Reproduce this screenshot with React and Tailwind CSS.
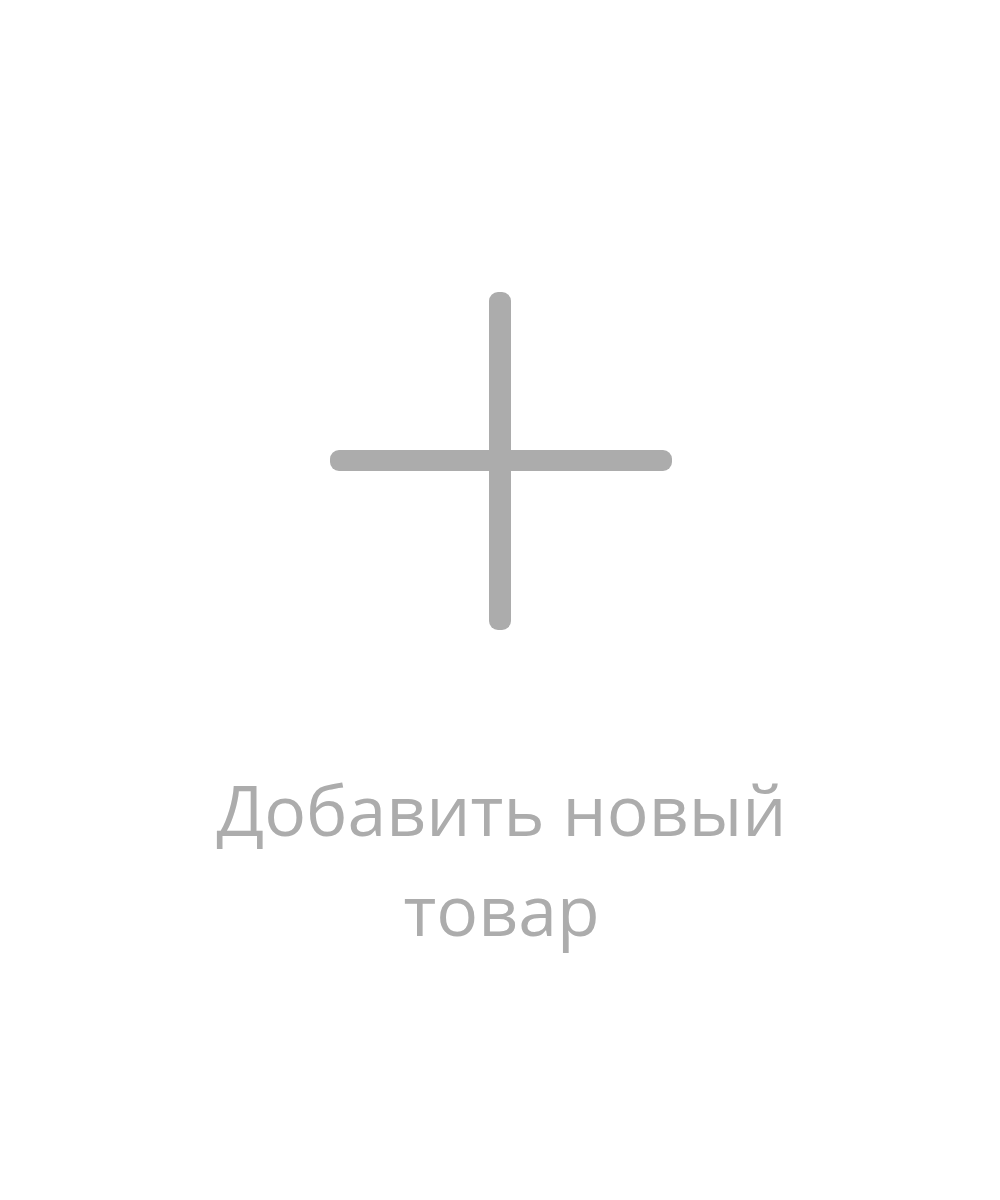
export default function App() {
  return (
    <div className="w-[1000px] h-[1200px] bg-white flex flex-col items-center pt-[292px]">
      <svg width="342" height="338" viewBox="0 0 342 338" className="block ml-[2px]">
        <rect x="159" y="0" width="22" height="338" rx="9" fill="#acacac" />
        <rect x="0" y="158" width="342" height="21" rx="9" fill="#acacac" />
      </svg>
      <div
        className="mt-[129px] ml-[3px] w-[640px] text-center text-[69.7px] leading-[100px] text-[#acacac]"
        style={{ fontFamily: '"Open Sans", "Noto Sans", sans-serif' }}
      >
        Добавить новый товар
      </div>
    </div>
  );
}
